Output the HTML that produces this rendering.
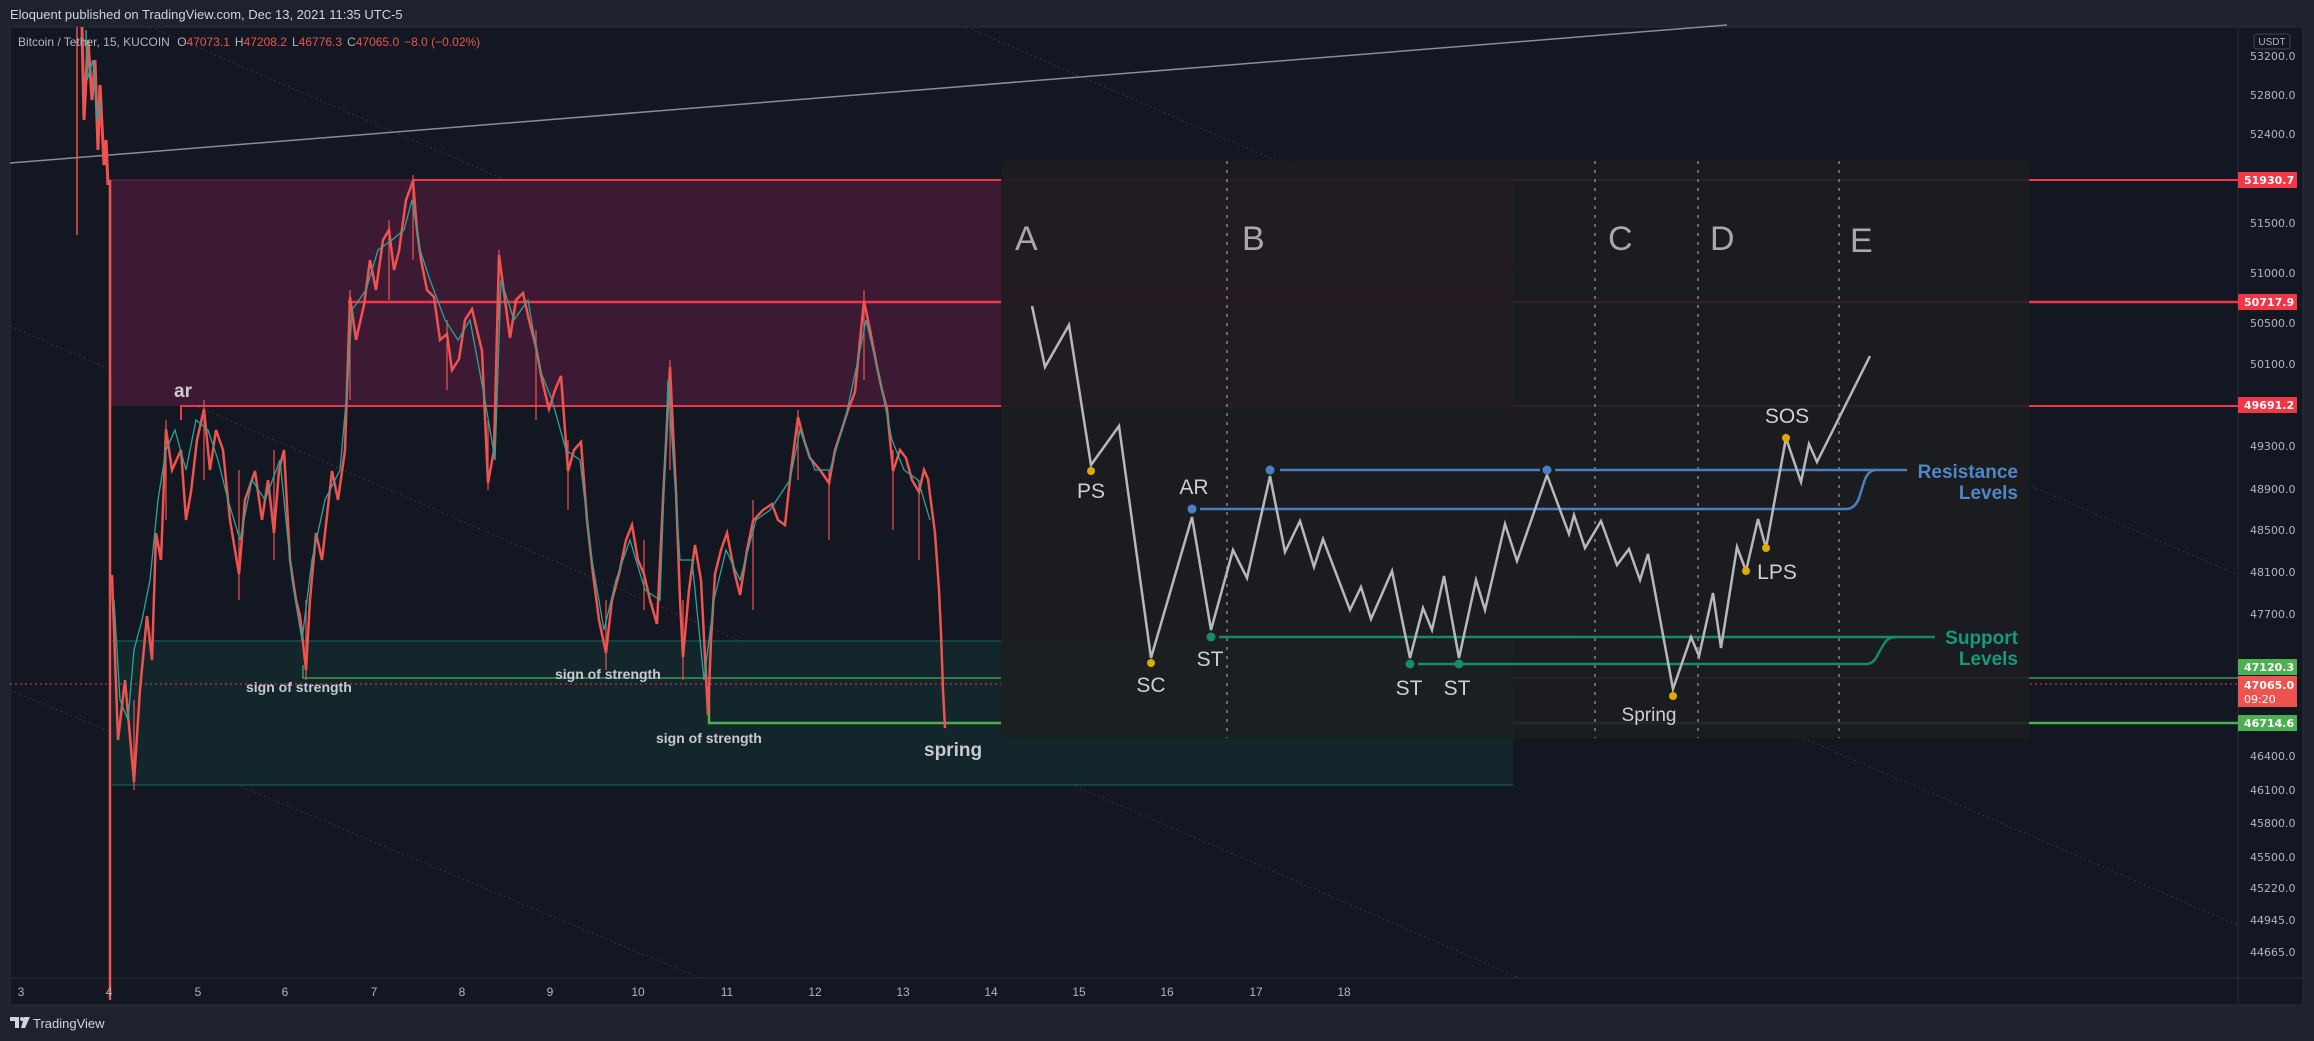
<!DOCTYPE html>
<html><head><meta charset="utf-8"><style>
html,body{margin:0;padding:0;background:#1e222d;}
body{width:2314px;height:1041px;overflow:hidden;position:relative;font-family:"Liberation Sans",sans-serif;}
svg{position:absolute;left:0;top:0}
</style></head><body>
<svg width="2314" height="1041" viewBox="0 0 2314 1041" xmlns="http://www.w3.org/2000/svg" font-family="Liberation Sans, sans-serif">
<rect x="0" y="0" width="2314" height="1041" fill="#1e222d"/>
<text x="10" y="19" fill="#d1d4dc" font-size="13">Eloquent published on TradingView.com, Dec 13, 2021 11:35 UTC-5</text>
<rect x="10" y="27" width="2293" height="978" fill="#131722" stroke="#2a2e39" stroke-width="1"/>
<line x1="2238" y1="27" x2="2238" y2="1005" stroke="#2a2e39"/>
<line x1="10" y1="978" x2="2303" y2="978" stroke="#2a2e39"/>

<g stroke="#5a2a36" stroke-width="1" stroke-dasharray="2,3" fill="none">
<line x1="150" y1="27" x2="2238" y2="925"/>
<line x1="966" y1="27" x2="2238" y2="575"/>
<line x1="10" y1="326" x2="1520" y2="978"/>
<line x1="10" y1="690" x2="700" y2="978"/>
</g>
<line x1="10" y1="163" x2="1727" y2="25" stroke="#8a8d96" stroke-width="1.5"/>

<rect x="109" y="180" width="1404" height="226" fill="#3d1a33"/>
<rect x="112" y="641" width="1401" height="144" fill="#13262b"/>
<line x1="109" y1="180" x2="1513" y2="180" stroke="#7a1f4a" stroke-width="1"/>
<line x1="112" y1="641" x2="1513" y2="641" stroke="#146b66" stroke-width="1"/>
<line x1="112" y1="785" x2="1513" y2="785" stroke="#146b66" stroke-width="1"/>

<g stroke-width="2" fill="none">
<line x1="413" y1="180" x2="2238" y2="180" stroke="#f23645"/>
<line x1="348" y1="302" x2="2238" y2="302" stroke="#f23645" stroke-width="2.5"/>
<polyline points="181,420 181,406 2238,406" stroke="#f23645"/>
<polyline points="303,665 303,678 2238,678" stroke="#4caf50" stroke-width="1.3"/>
<polyline points="709,690 709,723 2238,723" stroke="#4caf50" stroke-width="2.5"/>
</g>
<line x1="10" y1="684" x2="2238" y2="684" stroke="#f23645" stroke-width="1" stroke-dasharray="2,3"/>

<g fill="none" stroke-linejoin="miter">
<line x1="77" y1="27" x2="77" y2="235" stroke="#ef5350" stroke-width="1.5"/>
<polyline points="82,27 84,120 88,40 92,100 95,60 98,150 100,85 104,165 106,140 108,185" stroke="#ef5350" stroke-width="3"/>
<polyline points="86,30 87,80 93,60 97,120 102,100" stroke="#26a69a" stroke-width="1.5"/>
<line x1="110" y1="180" x2="110" y2="1000" stroke="#ef5350" stroke-width="2.5"/>
<g stroke="#ef5350" stroke-width="1.2">
<line x1="134" y1="700" x2="134" y2="790"/><line x1="166" y1="420" x2="166" y2="520"/><line x1="204" y1="400" x2="204" y2="480"/><line x1="239" y1="470" x2="239" y2="600"/><line x1="274" y1="450" x2="274" y2="560"/><line x1="306" y1="600" x2="306" y2="680"/><line x1="350" y1="290" x2="350" y2="400"/><line x1="389" y1="220" x2="389" y2="300"/><line x1="413" y1="175" x2="413" y2="260"/><line x1="447" y1="320" x2="447" y2="390"/><line x1="488" y1="420" x2="488" y2="490"/><line x1="499" y1="250" x2="499" y2="320"/><line x1="536" y1="330" x2="536" y2="420"/><line x1="568" y1="440" x2="568" y2="510"/><line x1="606" y1="600" x2="606" y2="670"/><line x1="644" y1="540" x2="644" y2="610"/><line x1="670" y1="360" x2="670" y2="470"/><line x1="683" y1="600" x2="683" y2="680"/><line x1="753" y1="500" x2="753" y2="610"/><line x1="798" y1="410" x2="798" y2="480"/><line x1="829" y1="470" x2="829" y2="540"/><line x1="864" y1="290" x2="864" y2="380"/><line x1="893" y1="450" x2="893" y2="530"/><line x1="919" y1="480" x2="919" y2="560"/>
</g>
<polyline points="112,575 118,740 125,680 134,782 140,690 147,616 152,660 156,533 161,560 166,429 172,470 181,450 186,520 191,492 197,440 204,409 210,470 216,430 223,450 230,520 239,574 245,500 255,471 262,520 268,480 274,533 279,470 284,450 290,560 296,600 300,616 306,670 310,600 316,533 322,560 332,471 338,500 345,450 350,297 356,340 364,305 370,260 376,290 383,240 389,230 394,270 399,251 406,200 413,181 417,230 421,260 427,290 434,297 440,340 447,334 452,370 459,359 465,320 472,309 477,330 482,351 488,483 494,450 499,255 505,300 510,338 516,300 523,293 529,320 536,347 542,380 549,409 555,390 561,376 565,430 568,471 574,450 581,442 587,520 593,574 599,620 606,653 612,600 619,574 626,540 632,525 638,560 644,574 650,600 657,624 663,500 670,367 673,430 676,492 680,600 683,657 689,590 695,545 701,580 708,715 711,640 715,574 721,550 727,533 734,570 740,595 747,550 753,521 763,510 772,504 778,520 785,525 791,470 798,417 804,440 810,458 820,470 829,483 835,450 842,429 848,410 855,392 860,340 864,301 870,330 877,367 882,390 887,409 890,440 893,471 900,450 906,458 912,480 919,492 924,470 928,479 932,510 935,533 939,590 941,633 943,690 945,728" stroke="#ef5350" stroke-width="2.5"/>
<polyline points="114,600 120,700 128,720 134,650 142,620 150,580 158,500 166,450 175,430 186,470 196,420 208,430 218,460 228,500 240,540 252,480 265,500 280,460 292,580 302,640 312,560 325,500 340,470 348,380 352,310 366,290 378,250 392,240 404,230 412,200 420,250 430,280 445,320 458,340 470,320 485,400 495,460 501,280 514,320 528,300 540,370 552,400 566,450 580,460 592,560 604,630 616,580 630,540 645,590 660,600 668,380 680,560 692,560 704,680 714,600 726,550 740,580 756,520 770,510 790,480 800,430 815,470 830,470 845,420 858,360 866,320 880,380 892,440 904,470 918,480 930,520" stroke="#26a69a" stroke-width="1.3"/>
</g>

<g>
<rect x="1001" y="161" width="1028" height="577" fill="#1d1d20" opacity="0.9"/>
<rect x="1001" y="180" width="512" height="226" fill="#241b23" opacity="0.95"/>
<rect x="1001" y="641" width="512" height="97" fill="#1a2123" opacity="0.95"/>
<g stroke="#6a6a70" stroke-width="2" stroke-dasharray="3,6">
<line x1="1227" y1="161" x2="1227" y2="738"/>
<line x1="1595" y1="161" x2="1595" y2="738"/>
<line x1="1698" y1="161" x2="1698" y2="738"/>
<line x1="1839" y1="161" x2="1839" y2="738"/>
</g>
<g fill="#a8a8ad" font-size="34">
<text x="1015" y="250">A</text><text x="1242" y="250">B</text><text x="1608" y="250">C</text><text x="1710" y="250">D</text><text x="1850" y="252">E</text>
</g>
<g fill="none" stroke-width="2.5">
<line x1="1280" y1="470" x2="1540" y2="470" stroke="#4a80bf"/>
<line x1="1555" y1="470" x2="1907" y2="470" stroke="#4a80bf"/>
<path d="M1200 509 L1846 509 Q1856 509 1860 495 L1864 482 Q1868 470 1876 470" stroke="#4a80bf"/>
<line x1="1219" y1="637" x2="1935" y2="637" stroke="#168a6c"/>
<path d="M1418 664 L1465 664 M1465 664 L1866 664 Q1874 664 1878 654 L1884 644 Q1888 637 1896 637" stroke="#168a6c"/>
</g>
<polyline fill="none" stroke="#b8b8bc" stroke-width="2.5" stroke-linejoin="miter" points="1032,306 1045,367 1069,325 1091,465 1119,426 1151,658 1192,517 1211,630 1233,550 1247,578 1270,476 1285,552 1300,521 1314,567 1323,539 1350,610 1361,587 1371,619 1392,571 1410,658 1423,608 1432,630 1444,576 1459,658 1476,580 1485,610 1505,524 1517,561 1547,475 1569,534 1574,515 1585,548 1601,521 1617,565 1629,549 1640,580 1648,554 1673,689 1691,637 1699,656 1713,593 1721,648 1737,547 1746,571 1758,519 1766,548 1786,438 1801,482 1809,444 1817,462 1870,356"/>
<g fill="#e0a800">
<circle cx="1091" cy="471" r="4"/><circle cx="1151" cy="663" r="4"/><circle cx="1673" cy="696" r="4"/><circle cx="1746" cy="571" r="4"/><circle cx="1766" cy="548" r="4"/><circle cx="1786" cy="438" r="4"/>
</g>
<g fill="#4a80bf"><circle cx="1192" cy="509" r="4.5"/><circle cx="1270" cy="470" r="4.5"/><circle cx="1547" cy="470" r="4.5"/></g>
<g fill="#168a6c"><circle cx="1211" cy="637" r="4.5"/><circle cx="1410" cy="664" r="4.5"/><circle cx="1459" cy="664" r="4.5"/></g>
<g fill="#cfcfd2" font-size="21" text-anchor="middle">
<text x="1091" y="498">PS</text><text x="1194" y="494">AR</text><text x="1151" y="692">SC</text><text x="1210" y="666">ST</text><text x="1409" y="695">ST</text><text x="1457" y="695">ST</text><text x="1649" y="721" font-size="19">Spring</text><text x="1787" y="423">SOS</text><text x="1777" y="579">LPS</text>
</g>
<g font-size="19" font-weight="bold" text-anchor="end">
<text x="2018" y="478" fill="#4f86c6">Resistance</text><text x="2018" y="499" fill="#4f86c6">Levels</text>
<text x="2018" y="644" fill="#149a7c">Support</text><text x="2018" y="665" fill="#149a7c">Levels</text>
</g>
</g>

<g fill="#c9cad0" font-size="14" font-weight="bold">
<text x="174" y="397" font-size="19">ar</text>
<text x="246" y="692">sign of strength</text>
<text x="555" y="679">sign of strength</text>
<text x="656" y="743">sign of strength</text>
<text x="924" y="756" font-size="19">spring</text>
</g>

<text x="18" y="46" font-size="12" fill="#b2b5be">Bitcoin / Tether, 15, KUCOIN <tspan dx="4">O</tspan><tspan fill="#ef5350">47073.1</tspan><tspan dx="5">H</tspan><tspan fill="#ef5350">47208.2</tspan><tspan dx="5">L</tspan><tspan fill="#ef5350">46776.3</tspan><tspan dx="5">C</tspan><tspan fill="#ef5350">47065.0</tspan><tspan dx="5" fill="#ef5350">−8.0 (−0.02%)</tspan></text>

<rect x="2254" y="34" width="36" height="15" rx="3" fill="#131722" stroke="#434651"/>
<text x="2272" y="45" font-size="10" fill="#b2b5be" text-anchor="middle">USDT</text>
<g font-size="11" fill="#b2b5be" font-family="DejaVu Sans, sans-serif">
<text x="2250" y="60">53200.0</text><text x="2250" y="99">52800.0</text><text x="2250" y="138">52400.0</text>
<text x="2250" y="227">51500.0</text><text x="2250" y="277">51000.0</text><text x="2250" y="327">50500.0</text>
<text x="2250" y="368">50100.0</text><text x="2250" y="450">49300.0</text><text x="2250" y="493">48900.0</text>
<text x="2250" y="534">48500.0</text><text x="2250" y="576">48100.0</text><text x="2250" y="618">47700.0</text>
<text x="2250" y="760">46400.0</text><text x="2250" y="794">46100.0</text><text x="2250" y="827">45800.0</text>
<text x="2250" y="861">45500.0</text><text x="2250" y="892">45220.0</text><text x="2250" y="924">44945.0</text>
<text x="2250" y="956">44665.0</text>
</g>
<g font-size="11" font-weight="bold" fill="#ffffff" font-family="DejaVu Sans, sans-serif">
<rect x="2238" y="172" width="59" height="16" fill="#f23645"/><text x="2244" y="184">51930.7</text>
<rect x="2238" y="294" width="59" height="16" fill="#f23645"/><text x="2244" y="306">50717.9</text>
<rect x="2238" y="397" width="59" height="16" fill="#f23645"/><text x="2244" y="409">49691.2</text>
<rect x="2238" y="659" width="59" height="16" fill="#4caf50"/><text x="2244" y="671">47120.3</text>
<rect x="2238" y="676" width="59" height="31" fill="#ef5350"/><text x="2244" y="689">47065.0</text><text x="2244" y="703" font-weight="normal">09:20</text>
<rect x="2238" y="715" width="59" height="16" fill="#4caf50"/><text x="2244" y="727">46714.6</text>
</g>

<g font-size="12" fill="#b2b5be" text-anchor="middle">
<text x="21" y="996">3</text><text x="109" y="996">4</text><text x="198" y="996">5</text><text x="285" y="996">6</text><text x="374" y="996">7</text><text x="462" y="996">8</text><text x="550" y="996">9</text><text x="638" y="996">10</text><text x="727" y="996">11</text><text x="815" y="996">12</text><text x="903" y="996">13</text><text x="991" y="996">14</text><text x="1079" y="996">15</text><text x="1167" y="996">16</text><text x="1256" y="996">17</text><text x="1344" y="996">18</text>
</g>

<g fill="#d1d4dc">
<path d="M10 1017 h9 v11 h-4 v-7 h-5z"/>
<circle cx="22" cy="1019" r="2"/>
<path d="M24 1017 h6 l-5 11 h-4z"/>
</g>
<text x="33" y="1028" font-size="13" fill="#d1d4dc">TradingView</text>
</svg>
</body></html>
